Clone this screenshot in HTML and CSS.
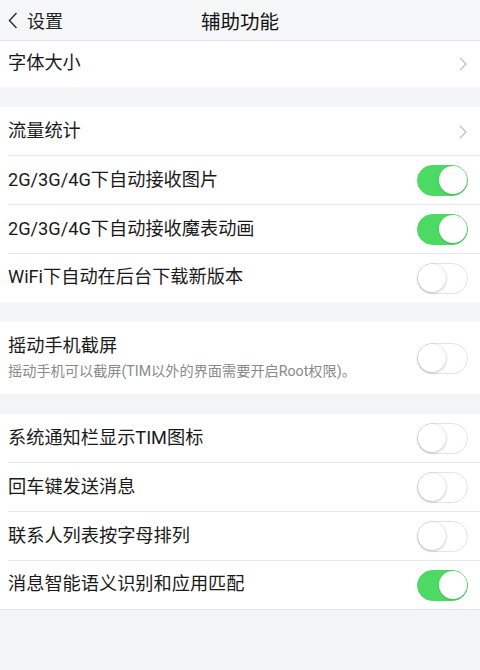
FILE: index.html
```html
<!DOCTYPE html>
<html lang="zh">
<head>
<meta charset="utf-8">
<link rel="stylesheet" href="styles.css">
</head>
<body>
<header class="nav">
  <div class="back">
    <svg class="back-icon" width="10" height="17" viewBox="0 0 10 17"><path d="M8.5 1 L1.5 8.5 L8.5 16" fill="none" stroke="#333" stroke-width="1.5"/></svg>
    <span>设置</span>
  </div>
  <div class="title">辅助功能</div>
</header>

<section class="group">
  <div class="row row-first"><span class="label">字体大小</span><svg class="chev" width="8" height="14" viewBox="0 0 8 14"><path d="M1 1 L7 7 L1 13" fill="none" stroke="#c2c2c6" stroke-width="1.4"/></svg></div>
</section>

<section class="group">
  <div class="row line"><span class="label">流量统计</span><svg class="chev" width="8" height="14" viewBox="0 0 8 14"><path d="M1 1 L7 7 L1 13" fill="none" stroke="#c2c2c6" stroke-width="1.4"/></svg></div>
  <div class="row line"><span class="label">2G/3G/4G下自动接收图片</span><span class="toggle on"><span class="knob"></span></span></div>
  <div class="row line"><span class="label">2G/3G/4G下自动接收魔表动画</span><span class="toggle on"><span class="knob"></span></span></div>
  <div class="row"><span class="label">WiFi下自动在后台下载新版本</span><span class="toggle"><span class="knob"></span></span></div>
</section>

<section class="group">
  <div class="row row-tall">
    <div class="text">
      <div class="label">摇动手机截屏</div>
      <div class="sub">摇动手机可以截屏(TIM以外的界面需要开启Root权限)。</div>
    </div>
    <span class="toggle"><span class="knob"></span></span>
  </div>
</section>

<section class="group group-last">
  <div class="row line"><span class="label">系统通知栏显示TIM图标</span><span class="toggle"><span class="knob"></span></span></div>
  <div class="row line"><span class="label">回车键发送消息</span><span class="toggle"><span class="knob"></span></span></div>
  <div class="row line"><span class="label">联系人列表按字母排列</span><span class="toggle"><span class="knob"></span></span></div>
  <div class="row"><span class="label">消息智能语义识别和应用匹配</span><span class="toggle on"><span class="knob"></span></span></div>
</section>
</body>
</html>
```

FILE: styles.css
```css
* { box-sizing: border-box; }
html, body { margin: 0; padding: 0; }
body {
  width: 480px;
  height: 670px;
  background: #f4f5f7;
  font-family: Roboto, "Noto Sans CJK SC", sans-serif;
  color: #1a1a1a;
  overflow: hidden;
}
.nav {
  height: 41px;
  background: #f5f6f8;
  border-bottom: 1px solid #e2e3e5;
  display: flex;
  align-items: center;
  justify-content: center;
  position: relative;
}
.back {
  position: absolute;
  left: 8px;
  top: 0;
  height: 40px;
  display: flex;
  align-items: center;
  font-size: 18px;
  color: #222;
}
.back-icon { margin-right: 9px; }
.title {
  font-size: 19.5px;
  color: #111;
}
.group {
  background: #fff;
  margin-bottom: 20px;
}
.group-last { border-bottom: 1px solid #e6e6e6; }
.row {
  height: 48px;
  padding: 0 12px 0 8px;
  display: flex;
  align-items: center;
  justify-content: space-between;
  position: relative;
}
.row-first { height: 46px; }
.row.line { height: 49px; }
.row.line::after {
  content: "";
  position: absolute;
  left: 8px;
  right: 0;
  bottom: 0;
  height: 1px;
  background: #e8e8e8;
}
.row-tall { height: 72px; }
.label {
  font-size: 18.2px;
  line-height: 1.2;
  white-space: nowrap;
  position: relative;
  top: -1px;
}
.text .label { margin-bottom: 3px; margin-top: -1px; top: 0; }
.sub {
  font-size: 14.2px;
  color: #8a8a8a;
  white-space: nowrap;
}
.chev { margin-right: 1px; }
.toggle {
  width: 51px;
  height: 31px;
  border-radius: 16px;
  border: 1.5px solid #e3e3e3;
  background: #fff;
  position: relative;
  flex: none;
}
.toggle .knob {
  position: absolute;
  top: 0;
  left: 0;
  width: 28px;
  height: 28px;
  border-radius: 50%;
  background: #fff;
  box-shadow: 0 1px 3px rgba(0,0,0,0.22), 0 0 0 0.5px rgba(0,0,0,0.08);
}
.toggle.on {
  background: #4cd964;
  border-color: #4cd964;
}
.toggle.on .knob {
  left: auto;
  right: 0;
  box-shadow: 0 1px 2px rgba(0,0,0,0.15);
}
```
